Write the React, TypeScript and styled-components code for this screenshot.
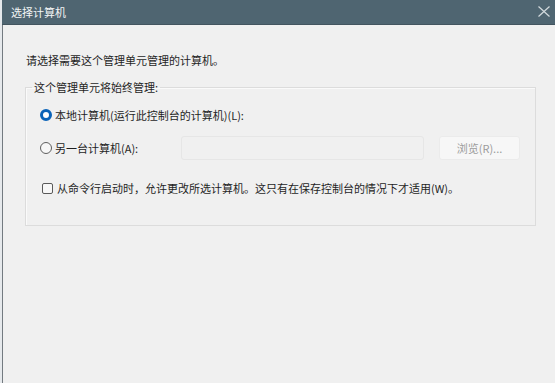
import React from "react";
import styled, { createGlobalStyle } from "styled-components";

const GlobalStyle = createGlobalStyle`
  html, body {
    margin: 0;
    padding: 0;
    background: #f0f0f0;
  }
  body {
    font-family: "Noto Sans CJK SC", "Noto Sans", sans-serif;
    font-size: 11px;
    color: #1f1f1f;
  }
`;

const App: React.FC = () => {
  return (
    <>
      <GlobalStyle />
      <Window>
        <TitleBar>
          <Title>选择计算机</Title>
          <CloseButton aria-label="关闭">
            <svg width="12" height="11" viewBox="0 0 12 11">
              <path d="M0.5 0.5 L11.5 10.5 M11.5 0.5 L0.5 10.5" stroke="#d3dadd" strokeWidth="1.2" />
            </svg>
          </CloseButton>
        </TitleBar>
        <Body>
          <Intro>请选择需要这个管理单元管理的计算机。</Intro>
          <Group>
            <Legend>这个管理单元将始终管理:</Legend>
            <GroupContent>
              <Row>
                <Choice>
                  <Radio checked />
                  <span>本地计算机(运行此控制台的计算机)(L):</span>
                </Choice>
              </Row>
              <Row tall>
                <Choice>
                  <Radio />
                  <span>另一台计算机(A):</span>
                </Choice>
                <TextInput disabled />
                <BrowseButton disabled>浏览(R)...</BrowseButton>
              </Row>
              <CheckRow>
                <Choice>
                  <CheckBox />
                  <span>从命令行启动时，允许更改所选计算机。这只有在保存控制台的情况下才适用(W)。</span>
                </Choice>
              </CheckRow>
            </GroupContent>
          </Group>
        </Body>
      </Window>
    </>
  );
};

export default App;

const Window = styled.div`
  display: flex;
  flex-direction: column;
  height: 383px;
  width: 555px;
  padding-left: 2px;
  box-sizing: border-box;
  background: #e6e9ec;
  overflow: hidden;
`;

const TitleBar = styled.div`
  display: flex;
  align-items: center;
  justify-content: space-between;
  height: 24px;
  padding: 0 5px 0 9px;
  background: #4f6571;
  border-bottom: 1px solid #43555f;
`;

const Title = styled.span`
  color: #f3f5f6;
  font-size: 11px;
  line-height: 16px;
`;

const CloseButton = styled.div`
  display: flex;
  align-items: center;
  margin-top: -2px;
`;

const Body = styled.div`
  flex: 1;
  background: #f0f0f0;
  border-left: 1px solid #737a80;
  padding: 27px 19px 0 22px;
`;

const Intro = styled.p`
  margin: 0 0 11px 1px;
  font-size: 11px;
  line-height: 16px;
`;

const Group = styled.fieldset`
  margin: 0;
  padding: 0;
  border: 1px solid #dcdcdc;
  box-shadow: inset 1px 1px 0 #fafafa;
`;

const Legend = styled.legend`
  margin-left: 6px;
  padding: 0 2px;
  font-size: 11px;
  line-height: 16px;
`;

const GroupContent = styled.div`
  display: flex;
  flex-direction: column;
  padding: 10px 15px 27px 14px;
`;

const Row = styled.div<{ tall?: boolean }>`
  display: flex;
  align-items: center;
  gap: 15px;
  height: ${(p) => (p.tall ? "24px" : "20px")};
  margin-top: ${(p) => (p.tall ? "11px" : "0")};
`;

const CheckRow = styled.div`
  display: flex;
  align-items: center;
  height: 20px;
  margin-top: 18px;
  padding-left: 2px;
`;

const Choice = styled.label`
  flex: 1;
  display: flex;
  align-items: center;
  gap: 3px;
  line-height: 16px;
  white-space: nowrap;
`;

const Radio = styled.span<{ checked?: boolean }>`
  width: 12px;
  height: 12px;
  box-sizing: border-box;
  border-radius: 50%;
  flex-shrink: 0;
  background: ${(p) => (p.checked ? "#fff" : "#f7f7f7")};
  border: ${(p) => (p.checked ? "3.5px solid #0a63b8" : "1px solid #5f5f5f")};
`;

const CheckBox = styled.span`
  width: 11px;
  height: 11px;
  box-sizing: border-box;
  flex-shrink: 0;
  margin-right: 1px;
  border: 1px solid #5a5a5a;
  border-radius: 2px;
  background: #f7f7f7;
`;

const TextInput = styled.input`
  width: 243px;
  height: 24px;
  box-sizing: border-box;
  border: 1px solid #e6e6e6;
  border-radius: 3px;
  background: #f0f0f0;
`;

const BrowseButton = styled.button`
  width: 81px;
  height: 24px;
  box-sizing: border-box;
  border: 1px solid #ebebeb;
  border-radius: 3px;
  background: #f7f7f7;
  color: #9c9c9c;
  font-family: "Noto Sans CJK SC", "Noto Sans", sans-serif;
  font-size: 11px;
  padding: 0;
`;
